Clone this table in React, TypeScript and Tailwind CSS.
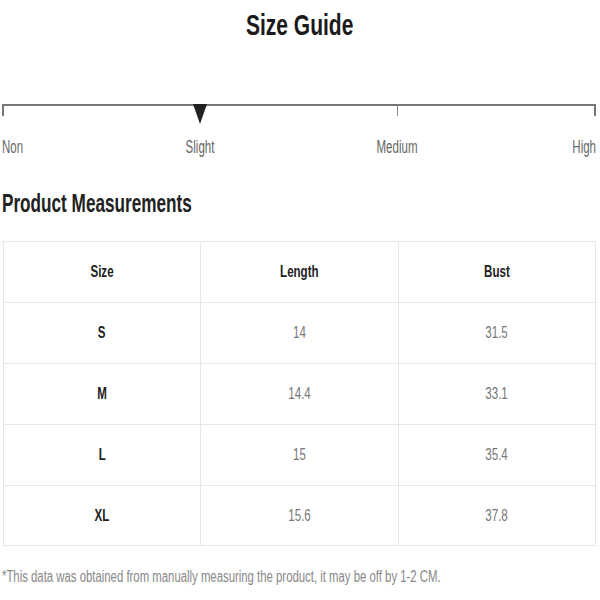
import React from 'react';

const rows = [
  { size: 'S', length: '14', bust: '31.5' },
  { size: 'M', length: '14.4', bust: '33.1' },
  { size: 'L', length: '15', bust: '35.4' },
  { size: 'XL', length: '15.6', bust: '37.8' },
];

const font = { fontFamily: '"Liberation Sans", Arial, sans-serif' };

// the screenshot uses a condensed face; squeeze Liberation Sans horizontally
const Narrow: React.FC<{ className?: string; children: React.ReactNode }> = ({ className = '', children }) => (
  <span className={`inline-block whitespace-nowrap ${className}`}>{children}</span>
);

export default function App() {
  return (
    <div className="w-[600px] h-[600px] bg-white overflow-hidden" style={font}>
      {/* Title */}
      <h1 className="pt-[8px] text-center text-[30px] font-bold text-[#1a1a1a] leading-[34px]">
        <Narrow className="scale-x-[0.7]">Size Guide</Narrow>
      </h1>

      {/* Stretch scale */}
      <div className="mt-[62px] pl-[2px] pr-[4px]">
        <div className="relative h-[12px] border-t-2 border-[#777]">
          <div className="absolute left-0 top-0 h-[10px] w-[2px] bg-[#777]" />
          <div className="absolute left-[395px] top-0 h-[10px] w-px bg-[#888]" />
          <div className="absolute right-0 top-0 h-[10px] w-[2px] bg-[#777]" />
          <div className="absolute left-[191px] -top-[2px] w-0 h-0 border-l-[7px] border-r-[7px] border-t-[20px] border-l-transparent border-r-transparent border-t-[#222]" />
        </div>
        <div className="relative mt-[21px] h-[20px] text-[18px] text-[#666] leading-[20px]">
          <span className="absolute left-0"><Narrow className="origin-left scale-x-[0.64]">Non</Narrow></span>
          <span className="absolute left-[198px] -translate-x-1/2"><Narrow className="scale-x-[0.64]">Slight</Narrow></span>
          <span className="absolute left-[395px] -translate-x-1/2"><Narrow className="scale-x-[0.64]">Medium</Narrow></span>
          <span className="absolute right-0"><Narrow className="origin-right scale-x-[0.64]">High</Narrow></span>
        </div>
      </div>

      {/* Measurements */}
      <h2 className="mt-[31px] px-[2px] text-[26px] font-bold text-[#222] leading-[30px]">
        <Narrow className="origin-left scale-x-[0.66]">Product Measurements</Narrow>
      </h2>

      <table className="mt-[23px] ml-[3px] w-[593px] border-collapse table-fixed">
        <thead>
          <tr className="h-[61px]">
            {['Size', 'Length', 'Bust'].map(h => (
              <th key={h} className="border border-[#e6e6e6] text-[17px] font-bold text-[#222]">
                <Narrow className="scale-x-[0.68]">{h}</Narrow>
              </th>
            ))}
          </tr>
        </thead>
        <tbody>
          {rows.map((r, i) => (
            <tr key={r.size} className={i === rows.length - 1 ? 'h-[60px]' : 'h-[61px]'}>
              <td className="border border-[#e6e6e6] text-center text-[17px] font-bold text-[#222]">
                <Narrow className="scale-x-[0.68]">{r.size}</Narrow>
              </td>
              <td className="border border-[#e6e6e6] text-center text-[17px] text-[#777]">
                <Narrow className="scale-x-[0.68]">{r.length}</Narrow>
              </td>
              <td className="border border-[#e6e6e6] text-center text-[17px] text-[#777]">
                <Narrow className="scale-x-[0.68]">{r.bust}</Narrow>
              </td>
            </tr>
          ))}
        </tbody>
      </table>

      <p className="mt-[22px] px-[2px] text-[16px] text-[#888] leading-[18px]">
        <Narrow className="origin-left scale-x-[0.71]">
          *This data was obtained from manually measuring the product, it may be off by 1-2 CM.
        </Narrow>
      </p>
    </div>
  );
}
